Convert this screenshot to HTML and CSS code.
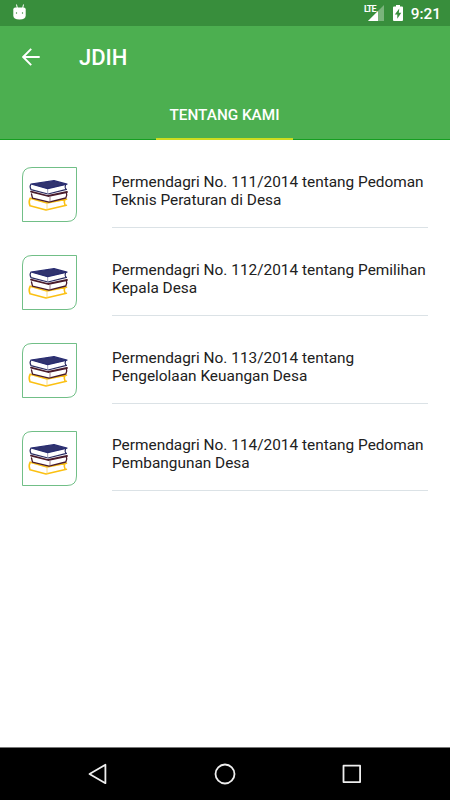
FILE: index.html
```html
<!DOCTYPE html>
<html lang="id">
<head>
  <meta charset="UTF-8">
  <meta name="viewport" content="width=device-width, initial-scale=1.0">
  <title>JDIH</title>
  <link rel="stylesheet" href="styles.css">
</head>
<body>
  <!-- Shared book icon -->
  <svg class="symbols" width="0" height="0">
    <symbol id="books" viewBox="0 0 55 55">
      <path d="M10 .5H54.5V45Q54.5 54.5 45 54.5H.5V10Q.5 .5 10 .5Z" fill="#fff" stroke="#4cae68" stroke-width=".8"/>
      <g fill="none" stroke-linejoin="round" stroke-linecap="round">
        <path d="M8.2 31.2Q6.3 35 8 38.8L24 43L44.4 38.2M8.2 31.2L25 36L44.5 32.2M42.8 32.8Q41.5 35 43 38" stroke="#fbc012" stroke-width="1.6"/>
        <path d="M25 36.5V42.5" stroke="#fbd667" stroke-width=".8"/>
        <path d="M9 24.6L26 29L45 25" stroke="#491b2b" stroke-width="1.8"/>
        <path d="M44.3 25.5Q45.6 28.5 43.8 31L27 35.2L10.5 31.2L9.5 27" stroke="#491b2b" stroke-width="1.3"/>
        <path d="M28 30V34.5" stroke="#8b6475" stroke-width=".8"/>
        <path d="M8.8 17.5Q7.3 19.5 9 22.6L26 27L44.5 22.3M43.5 18.2Q42.5 20 43.8 22.3" stroke="#292b62" stroke-width="1.2"/>
        <path d="M25.7 22V26.5" stroke="#8b8cad" stroke-width=".8"/>
        <path d="M9 17L32 13.7L45 17.2L25.7 21.7Z" fill="#30336f" stroke="#272b70" stroke-width="1.2"/>
      </g>
    </symbol>
  </svg>

  <div class="screen">
    <div class="status-bar">
      <svg class="droid" width="14" height="16" viewBox="0 0 14 16">
        <path d="M3.5 .5L4.3 4M10.5 .5L9.7 4" stroke="#fff" stroke-width="1"/>
        <path d="M.3 5.5Q.3 3.5 2.3 3.5H10.7Q12.7 3.5 12.7 5.5V11.5Q12.7 15.6 6.5 15.6Q.3 15.6 .3 11.5Z" fill="#fff"/>
        <circle cx="3.5" cy="9" r=".7" fill="#388e3c"/>
        <circle cx="9.5" cy="9" r=".7" fill="#388e3c"/>
      </svg>
      <div class="status-icons">
        <span class="lte">LTE</span>
        <svg class="signal" width="16" height="16" viewBox="0 0 16 16">
          <path d="M16 0V16H0Z" fill="#7ab47c"/>
          <path d="M10 6V16H0Z" fill="#fff"/>
        </svg>
        <svg class="battery" width="10" height="16" viewBox="0 0 10 16">
          <path d="M3 0H7V1.5H9Q10 1.5 10 2.5V15Q10 16 9 16H1Q0 16 0 15V2.5Q0 1.5 1 1.5H3Z" fill="#fff"/>
          <path d="M6.3 3.5L1.8 9.6H4.3V13.8L8.3 7.8H5.8Z" fill="#388e3c"/>
        </svg>
        <span class="clock">9:21</span>
      </div>
    </div>

    <header class="app-bar">
      <div class="toolbar">
        <svg class="back" width="18" height="18" viewBox="0 0 18 18">
          <path d="M9.2 .8L1.2 9L9.2 17.2M1.2 9H17.7" fill="none" stroke="#fff" stroke-width="1.9"/>
        </svg>
        <h1>JDIH</h1>
      </div>
      <nav class="tabs">
        <a class="tab">TENTANG KAMI</a>
      </nav>
    </header>

    <ul class="list">
      <li>
        <svg class="thumb"><use href="#books"/></svg>
        <p>Permendagri No. 111/2014 tentang Pedoman<br>Teknis Peraturan di Desa</p>
      </li>
      <li>
        <svg class="thumb"><use href="#books"/></svg>
        <p>Permendagri No. 112/2014 tentang Pemilihan<br>Kepala Desa</p>
      </li>
      <li>
        <svg class="thumb"><use href="#books"/></svg>
        <p>Permendagri No. 113/2014 tentang<br>Pengelolaan Keuangan Desa</p>
      </li>
      <li>
        <svg class="thumb"><use href="#books"/></svg>
        <p>Permendagri No. 114/2014 tentang Pedoman<br>Pembangunan Desa</p>
      </li>
    </ul>

    <!-- Android navigation buttons -->
    <footer class="nav-bar">
      <svg width="22" height="22" viewBox="0 0 22 22">
        <path d="M18.4 1.7V20.2L2.5 11Z"/>
      </svg>
      <svg width="22" height="22" viewBox="0 0 22 22">
        <circle cx="11" cy="11" r="9.5"/>
      </svg>
      <svg width="22" height="22" viewBox="0 0 22 22">
        <rect x="2.5" y="2.7" width="16.6" height="16.4"/>
      </svg>
    </footer>
  </div>
</body>
</html>
```

FILE: styles.css
```css
* {
  box-sizing: border-box;
}
body {
  margin: 0;
  font-family: Roboto, "Liberation Sans", sans-serif;
  background-color: #fff;
}
.symbols {
  display: block;
}
.screen {
  display: flex;
  flex-direction: column;
  height: 800px;
}
.status-bar {
  display: flex;
  justify-content: space-between;
  height: 26px;
  padding: 4px 9px 0 13px;
  background-color: #388e3c;
  color: #fff;
}
.status-icons {
  display: flex;
  align-items: flex-start;
}
.lte {
  font-size: 9px;
  font-weight: 700;
  line-height: 10px;
  letter-spacing: -0.9px;
  margin-right: -8px;
}
.signal {
  margin-top: 1px;
}
.battery {
  margin: 1px 8px 0 9px;
}
.clock {
  font-size: 15.4px;
  font-weight: 500;
  line-height: 20px;
}
.app-bar {
  height: 114px;
  background: linear-gradient(#159e20, #159e20) bottom / 100% 1px no-repeat #4caf50;
  color: #fff;
}
.toolbar {
  display: flex;
  align-items: center;
  height: 62px;
  padding-left: 22px;
}
.toolbar h1 {
  margin: 1px 0 0 39px;
  font-size: 22px;
  font-weight: 500;
}
.tabs {
  display: flex;
  height: 52px;
  padding-left: 156px;
}
.tab {
  width: 137px;
  border-bottom: 2px solid #cddc1f;
  font-size: 15.3px;
  font-weight: 500;
  line-height: 54px;
  text-align: center;
  white-space: nowrap;
}
.list {
  flex: 1;
  margin: 0;
  padding: 27.2px 22px 0;
  list-style: none;
}
.list li {
  display: flex;
  height: 87.8px;
}
.thumb {
  flex-shrink: 0;
  width: 55px;
  height: 55px;
  margin-right: 35px;
}
.list p {
  flex: 1;
  min-width: 0;
  height: 60.8px;
  margin: 0;
  padding-top: 5.8px;
  border-bottom: 1px solid #dbe2e6;
  color: #212121;
  font-size: 15.4px;
  line-height: 18px;
  white-space: nowrap;
}
.nav-bar {
  display: flex;
  justify-content: center;
  gap: 105px;
  height: 53px;
  padding-top: 15px;
  border-top: 1px solid #777;
  background-color: #000;
}
.nav-bar svg {
  fill: none;
  stroke: #eee;
  stroke-width: 1.8;
  stroke-linejoin: round;
}
```
